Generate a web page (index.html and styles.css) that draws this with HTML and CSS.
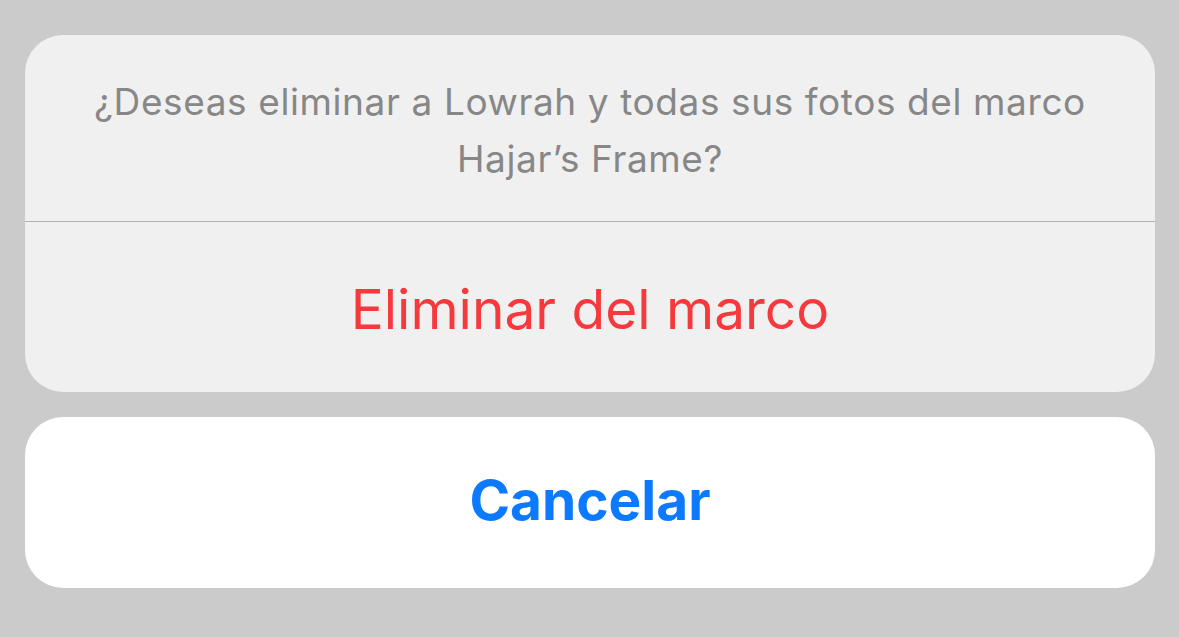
FILE: index.html
```html
<!DOCTYPE html>
<html lang="es">
<head>
  <meta charset="UTF-8">
  <meta name="viewport" content="width=device-width, initial-scale=1.0">
  <title>Eliminar del marco</title>
  <link rel="stylesheet" href="styles.css">
</head>
<body>
  <div class="action-sheet">
    <div class="sheet-group">
      <div class="sheet-message">¿Deseas eliminar a Lowrah y todas sus fotos del marco<br>Hajar’s Frame?</div>
      <button class="sheet-action destructive">Eliminar del marco</button>
    </div>
    <button class="sheet-cancel">Cancelar</button>
  </div>
</body>
</html>
```

FILE: styles.css
```css
/* hoja de acciones */
html, body {
  margin: 0;
  padding: 0;
  height: 100%;
}

body {
  background-color: #cbcbcb;
  font-family: Inter, "Noto Sans", sans-serif;
}

.action-sheet {
  display: flex;
  flex-direction: column;
  gap: 25px;
  padding: 35px 24px 0 25px;
}

.sheet-group {
  background-color: #f0f0f0;
  border-radius: 38px;
  overflow: hidden;
  display: flex;
  flex-direction: column;
}

.sheet-message {
  height: 187px;
  box-sizing: border-box;
  padding-top: 38px;
  text-align: center;
  color: #878787;
  font-size: 37px;
  line-height: 57px;
  letter-spacing: 0.6px;
  border-bottom: 1px solid #b3b3b3;
}

.sheet-action,
.sheet-cancel {
  border: none;
  background: none;
  font-family: inherit;
  cursor: pointer;
  width: 100%;
  padding: 0;
  box-sizing: border-box;
}

.sheet-action {
  height: 170px;
  padding-top: 3px;
  font-size: 55px;
}

.destructive {
  color: #f5393d;
}

.sheet-cancel {
  height: 171px;
  padding-bottom: 6px;
  background-color: #ffffff;
  border-radius: 38px;
  color: #0b7aff;
  font-size: 55px;
  font-weight: 700;
}
```
